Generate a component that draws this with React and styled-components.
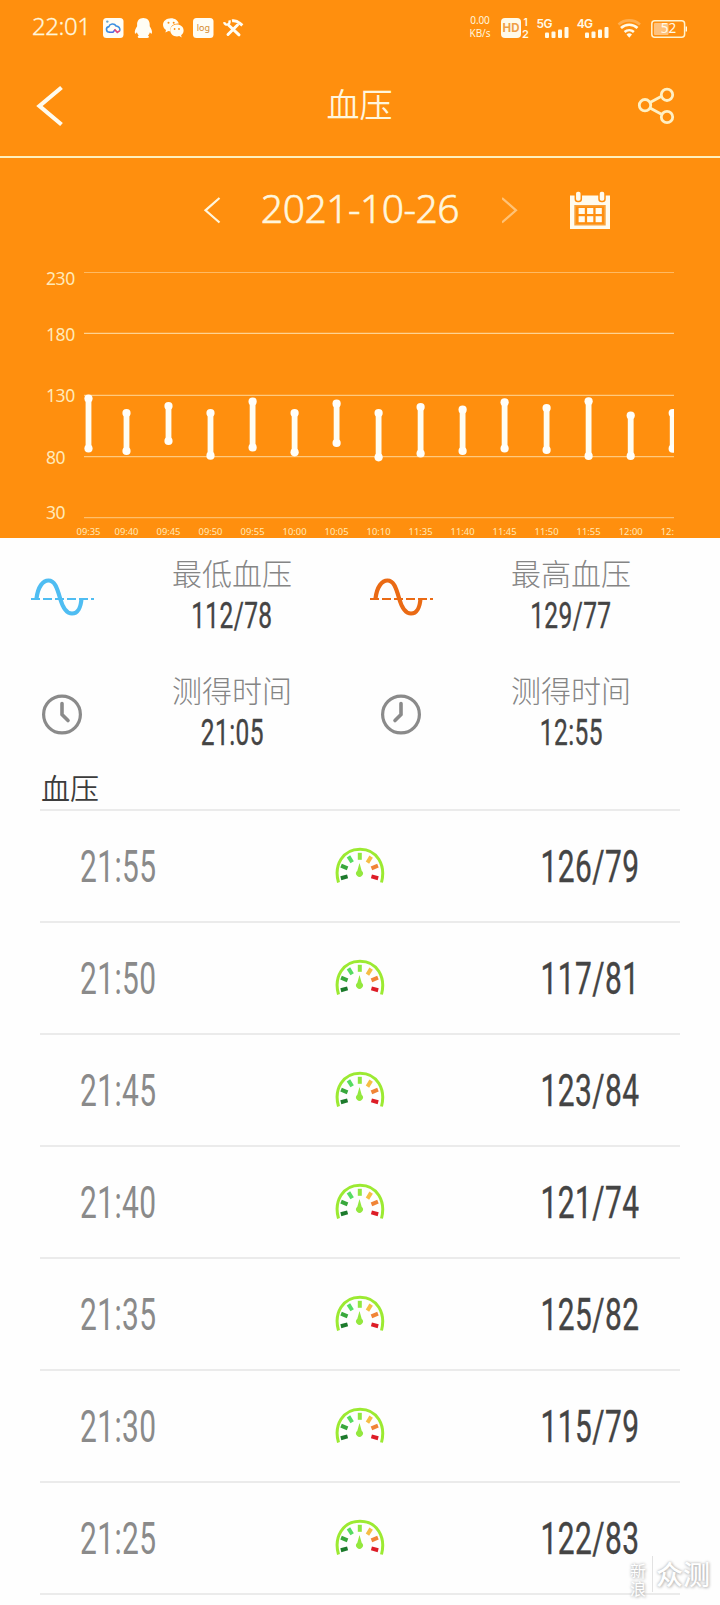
import React from 'react';
import styled, { createGlobalStyle } from 'styled-components';

const GlobalStyle = createGlobalStyle`
    * {
        box-sizing: border-box;
    }
    body {
        margin: 0;
        background: #fefefe;
        font-family: "Noto Sans", "Noto Sans CJK SC", sans-serif;
    }
    svg {
        display: block;
        flex: none;
    }
`;

const Page = styled.div`
    position: relative;
    width: 720px;
    height: 1605px;
    overflow: hidden;
    background: #fefefe;
`;

const TopPanel = styled.div`
    height: 538px;
    background: #ff8f0e;
    color: #fff6dd;
`;

const StatusBar = styled.div`
    display: flex;
    justify-content: space-between;
    align-items: center;
    height: 56px;
    padding: 0 33px 0 32px;
`;

const StatusGroup = styled.div`
    display: flex;
    align-items: center;
    height: 20px;
`;

const Clock = styled.div`
    width: 70px;
    font-size: 24px;
    font-weight: 300;
    line-height: 20px;
    letter-spacing: -0.4px;
    margin-top: -4px;
    -webkit-text-stroke: 0.3px currentColor;
`;

const Speed = styled.div`
    width: 22px;
    margin: -2px 9px 0 0;
    font-size: 10px;
    line-height: 13px;
    text-align: center;
    letter-spacing: -0.1px;
`;

const TitleBar = styled.header`
    display: flex;
    align-items: center;
    justify-content: space-between;
    height: 102px;
    padding: 0 45px 0 36px;
    border-bottom: 2px solid #fff0bd;
`;

const Title = styled.h1`
    margin: -6px 0 0 18px;
    font-family: "Noto Sans CJK SC", sans-serif;
    font-size: 33px;
    font-weight: 350;
    line-height: 40px;
`;

const DateBar = styled.div`
    display: flex;
    align-items: center;
    height: 104px;
    padding: 0 110px 0 203px;
`;

const DateText = styled.div`
    flex: 1;
    margin: -5px 3px 0 0;
    text-align: center;
    font-size: 39px;
    font-weight: 300;
    line-height: 44px;
    letter-spacing: -0.5px;
    white-space: nowrap;
    -webkit-text-stroke: 0.6px currentColor;
`;

const CalendarButton = styled.div`
    margin-left: 50px;
`;

const Summary = styled.section`
    display: grid;
    grid-template-columns: 339px 339px;
    grid-template-rows: 117px 117px;
    height: 234px;
`;

const SummaryCell = styled.div`
    display: flex;
    padding: 14px 0 0 30px;
`;

const SummaryIcon = styled.div`
    flex: none;
    width: 66px;
    padding-top: 25px;
`;

const SummaryText = styled.div`
    flex: none;
    display: flex;
    flex-direction: column;
    align-items: center;
    width: 272px;
`;

const SummaryLabel = styled.div`
    margin-bottom: 4px;
    font-family: "Noto Sans CJK SC", sans-serif;
    font-size: 30px;
    font-weight: 300;
    line-height: 40px;
    color: #858585;
    white-space: nowrap;
`;

// Roboto squeezed horizontally, stands in for a DIN condensed face
const Digits = styled.span`
    display: block;
    font-family: Roboto, sans-serif;
    font-size: ${props => props.$size}px;
    font-weight: 400;
    line-height: ${props => props.$size + 4}px;
    letter-spacing: 0.6px;
    color: ${props => props.$color || '#444'};
    -webkit-text-stroke: ${props => props.$stroke || 0}px currentColor;
    white-space: nowrap;
    transform: scaleX(0.68);
    transform-origin: ${props => props.$origin || 'center'};
`;

const ListTitle = styled.h2`
    height: 37px;
    margin: 0 41px;
    font-family: "Noto Sans CJK SC", sans-serif;
    font-size: 29px;
    font-weight: 350;
    line-height: 31px;
    color: #3c3c3c;
`;

const List = styled.ul`
    margin: 0 40px;
    padding: 0;
    list-style: none;
    border-top: 2px solid #ebebeb;
`;

const ListRow = styled.li`
    display: grid;
    grid-template-columns: 1fr 50px 1fr;
    align-items: center;
    height: 112px;
    padding: 2px 41px 0 40px;
    border-bottom: 2px solid #ebebeb;
`;

const RowValue = styled.div`
    display: flex;
    justify-content: flex-end;
`;

const Watermark = styled.div`
    position: absolute;
    right: 10px;
    bottom: 8px;
    display: flex;
    align-items: center;
    color: #fff;
    font-family: "Noto Sans CJK SC", sans-serif;
    text-shadow: 0 0 3px #aaa, 1px 1px 3px #ccc;
`;

const WatermarkSmall = styled.div`
    width: 18px;
    margin-right: 4px;
    font-size: 16px;
    line-height: 18px;
`;

const WatermarkBig = styled.div`
    padding-left: 3px;
    border-left: 1px solid #e2e2e2;
    font-size: 27px;
    font-weight: 500;
    line-height: 36px;
    margin-top: -10px;
`;

const bars = [
    { time: '09:35', x: 88.5, top: 398.5, bottom: 448.5 },
    { time: '09:40', x: 126.5, top: 413, bottom: 451 },
    { time: '09:45', x: 168.5, top: 406, bottom: 441 },
    { time: '09:50', x: 210.5, top: 413, bottom: 455.7 },
    { time: '09:55', x: 252.6, top: 401.5, bottom: 447.5 },
    { time: '10:00', x: 294.6, top: 413, bottom: 452.3 },
    { time: '10:05', x: 336.6, top: 403.7, bottom: 443 },
    { time: '10:10', x: 378.6, top: 413, bottom: 457.3 },
    { time: '11:35', x: 420.6, top: 407, bottom: 453.5 },
    { time: '11:40', x: 462.6, top: 409.7, bottom: 451 },
    { time: '11:45', x: 504.6, top: 402.3, bottom: 448.5 },
    { time: '11:50', x: 546.6, top: 408, bottom: 450 },
    { time: '11:55', x: 588.6, top: 401.3, bottom: 456 },
    { time: '12:00', x: 630.7, top: 415.5, bottom: 456 },
    { time: '12:05', x: 672.7, top: 413, bottom: 448.7 },
];

const scale = [
    { value: 230, line: 272.5, label: 279, opacity: 0.45 },
    { value: 180, line: 333.4, label: 334.7, opacity: 0.7 },
    { value: 130, line: 395.3, label: 396, opacity: 0.6 },
    { value: 80, line: 456.7, label: 458, opacity: 0.6 },
    { value: 30, line: 517.7, label: 512.3, opacity: 0.5 },
];

const readings = [
    { time: '21:55', value: '126/79' },
    { time: '21:50', value: '117/81' },
    { time: '21:45', value: '123/84' },
    { time: '21:40', value: '121/74' },
    { time: '21:35', value: '125/82' },
    { time: '21:30', value: '115/79' },
    { time: '21:25', value: '122/83' },
];

const AppIcons = () => (
    <svg width="142" height="22" viewBox="102 17 142 22" fill="#fffdf4">
        <rect x="103" y="18" width="20.5" height="20" rx="3.5" />
        <path d="M109.500 32.200c-3.600 0-4.200-5-.6-5.600.8-3 5.400-3.600 7.200-.6 2.600.2 4.400 2.400 3.600 4.800" fill="none" stroke="#3b8fe0" strokeWidth="1.600" />
        <path d="M109 32.200h4l2-2.400" fill="none" stroke="#4b6fe0" strokeWidth="1.600" />
        <path d="M114.500 29.400l2.800 3 2.600-1.800" fill="none" stroke="#e0457c" strokeWidth="1.600" />
        <circle cx="107.300" cy="21.600" r="1.200" fill="#6aa7c9" />
        <path d="M143.300 18c-4 0-6.200 2.800-6.200 6.400v1.800c-1.500 2-2.700 4.800-2.200 7.100.4.9 1.400-.1 2-1.100.3 1.300.9 2.400 1.900 3.300-1.500.6-1.500 2.500.9 2.500h7.400c2.200 0 2.400-1.900.9-2.500 1-.9 1.600-2 1.900-3.300.6 1 1.600 2 2 1.100.5-2.300-.7-5.100-2.200-7.100v-1.800c0-3.600-2.300-6.400-6.400-6.400z" />
        <path d="M171 18.200c-4.600 0-8 2.900-8 6.500 0 2.100 1.200 3.900 3 5.200l-.6 2.700 3-1.600c.7.2 1.300.3 2 .3-.9-5.400 3.600-8.200 8.400-7.800-.8-3.100-3.900-5.300-7.800-5.300z" />
        <path d="M177 24.600c-3.900 0-6.700 2.600-6.700 5.900s2.800 5.900 6.700 5.900c.8 0 1.500-.1 2.200-.3l2.500 1.400-.6-2.300c1.600-1.200 2.500-2.700 2.500-4.700 0-3.300-2.900-5.900-6.600-5.900z" />
        <g fill="#ff8f0e">
            <circle cx="168.500" cy="22.700" r="1" />
            <circle cx="173.700" cy="22.700" r="1" />
            <circle cx="174.600" cy="29" r=".9" />
            <circle cx="179" cy="29" r=".9" />
        </g>
        <rect x="193" y="18" width="20.500" height="20" rx="3.500" />
        <text x="203.300" y="31" textAnchor="middle" fontFamily="Noto Sans" fontSize="9" fill="#d58a2c">log</text>
        <g fill="none" stroke="#fffdf4">
            <path d="M229 25.500l10 9.300" strokeWidth="3" strokeLinecap="round" />
            <path d="M237.500 25L228 34.500" strokeWidth="3" strokeLinecap="round" />
            <path d="M224.200 22.200c.5 3.800 6.600 3 5.200-1.800" strokeWidth="2.400" />
            <path d="M232 20.800c3.500-.6 5.500.4 7.400 2.200l3 2.400" strokeWidth="3" />
        </g>
    </svg>
);

const SignalIcons = () => (
    <svg width="187" height="26" viewBox="501 15 187 26" fill="#fffae8">
        <rect x="502" y="18" width="20" height="20" rx="4" />
        <text x="512" y="32.200" textAnchor="middle" fontFamily="Inter" fontWeight="700" fontSize="11.500" fill="#f0a044">HD</text>
        <g fontFamily="Inter" fontWeight="600">
            <text x="524.500" y="26" fontSize="10">1</text>
            <text x="523" y="38" fontSize="11">2</text>
            <text x="537.500" y="27.500" fontSize="12" letterSpacing="-.6">5G</text>
            <text x="577.700" y="27.500" fontSize="12" letterSpacing="-.6">4G</text>
        </g>
        {[546, 586].map(x => (
            <g key={x}>
                <rect x={x} y="32.500" width="4" height="5.500" rx="1" />
                <rect x={x + 6.5} y="31.500" width="4" height="6.500" rx="1" />
                <rect x={x + 13} y="29.500" width="4" height="8.500" rx="1" />
                <rect x={x + 19.5} y="27" width="4" height="11" rx="1" />
            </g>
        ))}
        <g fill="none" stroke="#fffae8" strokeWidth="2.600">
            <path d="M619.500 24.500a16 16 0 0 1 21.500 0" opacity=".3" />
            <path d="M622 28a12 12 0 0 1 16.500 0" />
            <path d="M625.600 32a7 7 0 0 1 9.300 0" />
        </g>
        <path d="M627.500 34.600a4 4 0 0 1 5.500 0l-2.750 3.200z" />
        <rect x="652.800" y="20.800" width="32.800" height="16.400" rx="3" fill="none" stroke="#fff3cf" strokeWidth="1.500" />
        <rect x="655" y="23" width="14.500" height="12" rx="1" fill="#ffc27c" />
        <rect x="686.600" y="26.500" width="1.400" height="5" />
        <text x="669.500" y="32.500" textAnchor="middle" fontFamily="Noto Sans" fontSize="13.500">52</text>
    </svg>
);

const BackIcon = () => (
    <svg width="28" height="42" viewBox="0 0 28 42" fill="none" stroke="#fffbee" strokeWidth="4.200">
        <path d="M25.500 2.500L3.500 21l22 18.500" />
    </svg>
);

const ShareIcon = () => (
    <svg width="38" height="38" viewBox="637 87 38 38" fill="none" stroke="#fff0c4" strokeWidth="2.800">
        <circle cx="645" cy="105.200" r="5.700" />
        <circle cx="667" cy="94.800" r="5.700" />
        <circle cx="667" cy="117" r="5.700" />
        <path d="M650 102.500l12-6.600M650 108l12 6.500" />
    </svg>
);

const Chevron = ({ flip, faded }) => (
    <svg width="18" height="28" viewBox="0 0 18 28" fill="none" stroke="#fff6dd" strokeWidth="2.200" opacity={faded ? 0.5 : 1}>
        <path d={flip ? 'M0 2l14 12.300L0 26.500' : 'M16.500 2L2.500 14.300l14 12.200'} />
    </svg>
);

const CalendarIcon = () => (
    <svg width="40" height="38" viewBox="0 0 40 38" fill="#fffbee">
        <path d="M0 4.500h40V38H0z" />
        <rect x="5.300" y="0" width="6" height="10.500" rx="2.500" stroke="#ff8f0e" strokeWidth="1.500" />
        <rect x="29" y="0" width="6" height="10.500" rx="2.500" stroke="#ff8f0e" strokeWidth="1.500" />
        <path d="M4.300 14h31.400v20.500H4.300z" fill="#f7a23c" />
        <path d="M6 15.500h28v17.500H6z" fill="#ff8f0e" />
        {[8.6, 17.1, 25.6].map(x => (
            <g key={x}>
                <rect x={x} y="17" width="6.200" height="6" />
                <rect x={x} y="25.200" width="6.200" height="6" />
            </g>
        ))}
    </svg>
);

const Chart = () => (
    <svg width="720" height="276" viewBox="0 262 720 276" fontFamily="Noto Sans" fill="#ffe9b8">
        <clipPath id="plot">
            <rect x="70" y="262" width="604" height="276" />
        </clipPath>
        {scale.map(s => (
            <g key={s.value}>
                <text x="46" y={s.label + 6.3} fontSize="17.500" letterSpacing="-.4">{s.value}</text>
                <path d={`M84 ${s.line}H674`} stroke="#fff0c8" strokeWidth="1.200" opacity={s.opacity} />
            </g>
        ))}
        <g clipPath="url(#plot)">
            {bars.map(bar => (
                <g key={bar.time}>
                    <path d={`M${bar.x} ${bar.top}V${bar.bottom}`} stroke="#fffdf2" strokeWidth="5.800" />
                    <circle cx={bar.x} cy={bar.top} r="4.100" fill="#fffefa" />
                    <circle cx={bar.x} cy={bar.bottom} r="4.100" fill="#fffefa" />
                    <text x={bar.x} y="534.500" fontSize="9.400" textAnchor="middle">{bar.time}</text>
                </g>
            ))}
        </g>
    </svg>
);

const WaveIcon = ({ color }) => (
    <svg width="66" height="44" viewBox="0 0 66 44" fill="none" stroke={color}>
        <path d="M1 22H64" strokeWidth="2.200" strokeDasharray="9 3" />
        <path d="M6.500 21.500C8 9.500 13 3.500 18.500 3.500c6 0 8.500 7 11.500 17.500 2.500 9 6 15.500 12 15.500 5.500 0 9-6 9.500-15.500" strokeWidth="4.200" />
    </svg>
);

const ClockIcon = ({ flip }) => (
    <svg width="64" height="42" viewBox="0 0 64 42" fill="none" stroke="#8a8a8a">
        <circle cx="32" cy="20.500" r="18.400" strokeWidth="3.200" />
        <path d={flip ? 'M32 9.500V20.500l-6 6' : 'M32 9.500V20.500l6 6'} strokeWidth="3.600" strokeLinecap="round" />
    </svg>
);

const ticks = [
    { x: 9.2, y: 30.3, angle: 75, color: '#1c7a2c' },
    { x: 9.3, y: 20, angle: 112, color: '#38a83c' },
    { x: 15.3, y: 12.3, angle: 148, color: '#55dc62' },
    { x: 24.8, y: 9.3, angle: 0, color: '#8ee840' },
    { x: 34.3, y: 12.6, angle: 32, color: '#f6bd45' },
    { x: 39.7, y: 20, angle: 68, color: '#f08436' },
    { x: 39.8, y: 30.3, angle: 105, color: '#dd1c26' },
];

const GaugeIcon = () => (
    <svg width="50" height="40" viewBox="0 0 50 40">
        <path d="M3.500 35.500C-1.500 18 8 2.200 25 2.200S51 18 46.500 35.500" fill="none" stroke="#9cea32" strokeWidth="3" />
        {ticks.map(t => (
            <rect key={t.color} x={t.x - 2} y={t.y - 3.5} width="4" height="7" fill={t.color} transform={`rotate(${t.angle} ${t.x} ${t.y})`} />
        ))}
        <path d="M24.500 16l2.200 7.800a3.400 3.400 0 1 1-4.400 0z" fill="#93e83e" />
    </svg>
);

const SummaryItem = ({ icon, label, value }) => (
    <SummaryCell>
        <SummaryIcon>{icon}</SummaryIcon>
        <SummaryText>
            <SummaryLabel>{label}</SummaryLabel>
            <Digits $size={36} $stroke={0.4}>{value}</Digits>
        </SummaryText>
    </SummaryCell>
);

const App = () => (
    <Page>
        <GlobalStyle />
        <TopPanel>
            <StatusBar>
                <StatusGroup>
                    <Clock>22:01</Clock>
                    <AppIcons />
                </StatusGroup>
                <StatusGroup>
                    <Speed>0.00 KB/s</Speed>
                    <SignalIcons />
                </StatusGroup>
            </StatusBar>
            <TitleBar>
                <BackIcon />
                <Title>血压</Title>
                <ShareIcon />
            </TitleBar>
            <DateBar>
                <Chevron />
                <DateText>2021-10-26</DateText>
                <Chevron flip faded />
                <CalendarButton>
                    <CalendarIcon />
                </CalendarButton>
            </DateBar>
            <Chart />
        </TopPanel>
        <Summary>
            <SummaryItem icon={<WaveIcon color="#4fbdf2" />} label="最低血压" value="112/78" />
            <SummaryItem icon={<WaveIcon color="#ea6a14" />} label="最高血压" value="129/77" />
            <SummaryItem icon={<ClockIcon />} label="测得时间" value="21:05" />
            <SummaryItem icon={<ClockIcon flip />} label="测得时间" value="12:55" />
        </Summary>
        <ListTitle>血压</ListTitle>
        <List>
            {readings.map(r => (
                <ListRow key={r.time}>
                    <Digits $size={44} $color="#8a8a8a" $origin="left">{r.time}</Digits>
                    <GaugeIcon />
                    <RowValue>
                        <Digits $size={44} $stroke={0.4} $origin="right">{r.value}</Digits>
                    </RowValue>
                </ListRow>
            ))}
        </List>
        <Watermark>
            <WatermarkSmall>新浪</WatermarkSmall>
            <WatermarkBig>众测</WatermarkBig>
        </Watermark>
    </Page>
);

export default App;
